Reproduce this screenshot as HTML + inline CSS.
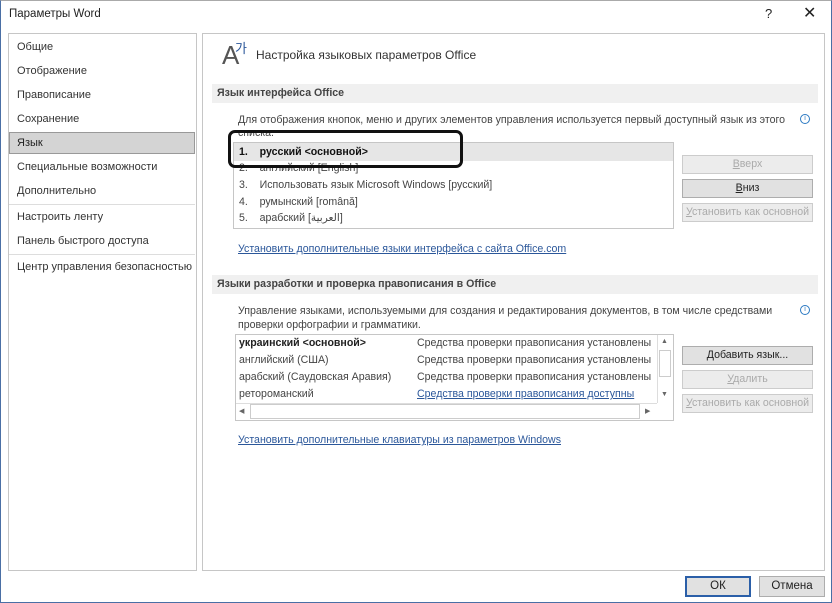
<!DOCTYPE html>
<html><head><meta charset="utf-8"><style>
*{margin:0;padding:0;box-sizing:border-box}
body{width:832px;height:603px;background:#fff;font-family:"Liberation Sans",sans-serif;font-size:10.6px;color:#333;position:relative;overflow:hidden}
.a{position:absolute;white-space:nowrap}
.win{position:absolute;left:0;top:0;width:832px;height:603px;border:1px solid #4a6fa5;border-top-color:#aaa}
.panel{position:absolute;border:1px solid #c6c6c6;background:#fff}
.hdr{position:absolute;left:212px;width:606px;height:19px;background:#f0f0f0;font-weight:bold;color:#444;padding:3px 0 0 5px}
.btn{position:absolute;left:682px;width:131px;height:19px;border:1px solid #ccc;background:#ececec;color:#aaa;text-align:center;line-height:17px}
.btn.on{border-color:#adadad;background:#e1e1e1;color:#222}
.lnk{color:#2b579a;text-decoration:underline}
.nav{left:17px;font-size:11px}
</style></head><body>
<div class="win"></div>
<div class="a" style="left:9px;top:8px;font-size:11.5px;color:#222">Параметры Word</div>
<div class="a" style="left:765px;top:6px;font-size:13px;color:#222">?</div>
<div class="a" style="left:803px;top:3px;font-size:16px;color:#222">✕</div>

<div class="panel" style="left:8px;top:33px;width:189px;height:538px"></div>
<div class="a nav" style="top:41px">Общие</div>
<div class="a nav" style="top:65px">Отображение</div>
<div class="a nav" style="top:89px">Правописание</div>
<div class="a nav" style="top:113px">Сохранение</div>
<div class="a" style="left:9px;top:132px;width:186px;height:22px;background:#d4d4d4;border:1px solid #999;padding:4px 0 0 7px;color:#222;font-size:11px">Язык</div>
<div class="a nav" style="top:161px">Специальные возможности</div>
<div class="a nav" style="top:185px">Дополнительно</div>
<div class="a" style="left:9px;top:204px;width:186px;height:1px;background:#ddd"></div>
<div class="a nav" style="top:211px">Настроить ленту</div>
<div class="a nav" style="top:235px">Панель быстрого доступа</div>
<div class="a" style="left:9px;top:254px;width:186px;height:1px;background:#ddd"></div>
<div class="a nav" style="top:261px">Центр управления безопасностью</div>

<div class="panel" style="left:202px;top:33px;width:623px;height:538px"></div>
<div class="a" style="left:222px;top:40px;font-size:26px;color:#555;font-weight:300">A</div>
<div class="a" style="left:235px;top:38px;font-size:13px;color:#2b579a">가</div>
<div class="a" style="left:256px;top:48px;font-size:12px;color:#333">Настройка языковых параметров Office</div>

<div class="hdr" style="top:84px">Язык интерфейса Office</div>
<div class="a" style="left:238px;top:114px;color:#444">Для отображения кнопок, меню и других элементов управления используется первый доступный язык из этого</div>
<div class="a" style="left:238px;top:127px;color:#444">списка.</div>
<div class="a" style="left:800px;top:114px;width:10px;height:10px;border:1px solid #2b79c2;border-radius:50%;font-size:7px;color:#2b79c2;text-align:center;line-height:8px">i</div>
<div class="panel" style="left:233px;top:142px;width:441px;height:87px"></div>
<div class="a" style="left:234px;top:143px;width:439px;height:18px;background:#e6e6e6"></div>
<div class="a" style="left:239px;top:146px;font-weight:bold;color:#111">1.&nbsp;&nbsp;&nbsp; русский &lt;основной&gt;</div>
<div class="a" style="left:239px;top:162px;color:#444">2.&nbsp;&nbsp;&nbsp; английский [English]</div>
<div class="a" style="left:239px;top:179px;color:#444">3.&nbsp;&nbsp;&nbsp; Использовать язык Microsoft Windows [русский]</div>
<div class="a" style="left:239px;top:196px;color:#444">4.&nbsp;&nbsp;&nbsp; румынский [română]</div>
<div class="a" style="left:239px;top:212px;color:#444">5.&nbsp;&nbsp;&nbsp; арабский [العربية]</div>
<div class="a" style="left:228px;top:130px;width:235px;height:38px;border:3px solid #111;border-radius:7px"></div>
<div class="btn" style="top:155px"><u>В</u>верх</div>
<div class="btn on" style="top:179px"><u>В</u>низ</div>
<div class="btn" style="top:203px"><u>У</u>становить как основной</div>
<div class="a lnk" style="left:238px;top:243px">Установить дополнительные языки интерфейса с сайта Office.com</div>

<div class="hdr" style="top:275px">Языки разработки и проверка правописания в Office</div>
<div class="a" style="left:238px;top:305px;color:#444">Управление языками, используемыми для создания и редактирования документов, в том числе средствами</div>
<div class="a" style="left:238px;top:319px;color:#444">проверки орфографии и грамматики.</div>
<div class="a" style="left:800px;top:305px;width:10px;height:10px;border:1px solid #2b79c2;border-radius:50%;font-size:7px;color:#2b79c2;text-align:center;line-height:8px">i</div>
<div class="panel" style="left:235px;top:334px;width:439px;height:87px"></div>
<div class="a" style="left:239px;top:337px;font-weight:bold;color:#222">украинский &lt;основной&gt;</div>
<div class="a" style="left:239px;top:354px;color:#444">английский (США)</div>
<div class="a" style="left:239px;top:371px;color:#444">арабский (Саудовская Аравия)</div>
<div class="a" style="left:239px;top:388px;color:#444">ретороманский</div>
<div class="a" style="left:417px;top:337px;color:#444">Средства проверки правописания установлены</div>
<div class="a" style="left:417px;top:354px;color:#444">Средства проверки правописания установлены</div>
<div class="a" style="left:417px;top:371px;color:#444">Средства проверки правописания установлены</div>
<div class="a lnk" style="left:417px;top:388px">Средства проверки правописания доступны</div>
<div class="a" style="left:657px;top:335px;width:16px;height:68px;border-left:1px solid #ddd;background:#fff"></div>
<div class="a" style="left:661px;top:338px;font-size:7px;color:#666">▲</div>
<div class="a" style="left:659px;top:350px;width:12px;height:27px;border:1px solid #ccc;background:#fff"></div>
<div class="a" style="left:661px;top:391px;font-size:7px;color:#666">▼</div>
<div class="a" style="left:236px;top:403px;width:421px;height:17px;border-top:1px solid #ddd;background:#fff"></div>
<div class="a" style="left:239px;top:407px;font-size:7px;color:#666">◀</div>
<div class="a" style="left:250px;top:404px;width:390px;height:15px;border:1px solid #ccc"></div>
<div class="a" style="left:645px;top:407px;font-size:7px;color:#666">▶</div>
<div class="btn on" style="top:346px"><u>Д</u>обавить язык...</div>
<div class="btn" style="top:370px"><u>У</u>далить</div>
<div class="btn" style="top:394px"><u>У</u>становить как основной</div>
<div class="a lnk" style="left:238px;top:434px">Установить дополнительные клавиатуры из параметров Windows</div>

<div class="a" style="left:685px;top:576px;width:66px;height:21px;border:2px solid #2b5fa8;background:#e1e1e1;text-align:center;line-height:17px;color:#222;font-size:11.5px">ОК</div>
<div class="a" style="left:759px;top:576px;width:66px;height:21px;border:1px solid #adadad;background:#e1e1e1;text-align:center;line-height:19px;color:#222;font-size:11.5px">Отмена</div>
</body></html>
